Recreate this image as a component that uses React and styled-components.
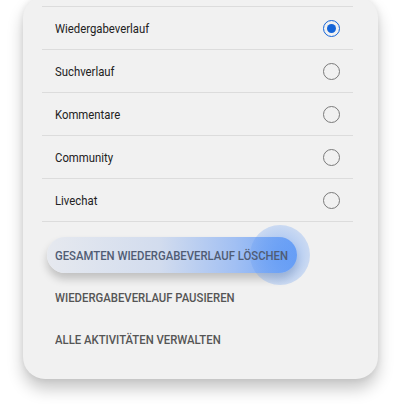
import React from 'react';
import styled, { createGlobalStyle } from 'styled-components';

const GlobalStyle = createGlobalStyle`
  html, body { margin: 0; padding: 0; background: #fff; }
  body { font-family: Roboto, "Noto Sans", sans-serif; }
`;

const Page = styled.div`
  width: 403px;
  height: 404px;
  overflow: hidden;
  padding: 0 25px 0 23px;
  box-sizing: border-box;
`;

const Card = styled.div`
  margin-top: -4px;
  height: 383px;
  background: #f1f1f1;
  border-radius: 22px;
  box-shadow: 0 10px 16px rgba(0, 0, 0, 0.22), 0 0 6px rgba(0, 0, 0, 0.08);
  padding: 10px 25px 0 19px;
  box-sizing: border-box;
`;

const List = styled.ul`
  list-style: none;
  margin: 0;
  padding: 0;
  border-top: 1px solid #dcdcdc;
`;

const Row = styled.li`
  height: 42px;
  border-bottom: 1px solid #dcdcdc;
  display: flex;
  align-items: center;
  justify-content: space-between;
  padding: 0 13px;
  font-size: 12.6px;
  color: #222;
`;

// the shot is a little narrow, so glyphs are squeezed sideways
const Text = styled.span`
  position: relative;
  display: inline-block;
  white-space: nowrap;
  transform: scaleX(0.9);
  transform-origin: left center;
`;

const Radio = styled.span`
  width: 17px;
  height: 17px;
  box-sizing: border-box;
  border-radius: 50%;
  border: 1.5px solid ${p => (p.checked ? '#1565d8' : '#7a7a7a')};
  display: flex;
  align-items: center;
  justify-content: center;
  &::after {
    content: '';
    display: ${p => (p.checked ? 'block' : 'none')};
    width: 9px;
    height: 9px;
    border-radius: 50%;
    background: #1565d8;
  }
`;

const Actions = styled.div`
  display: flex;
  flex-direction: column;
  padding-top: 12px;
`;

const Action = styled.div`
  position: relative;
  height: 42px;
  display: flex;
  align-items: center;
  padding-left: 13px;
  font-size: 12.6px;
  font-weight: 500;
  color: ${p => (p.active ? '#505c74' : '#555')};
`;

const Pill = styled.span`
  position: absolute;
  left: 5px;
  top: 3px;
  width: 250px;
  height: 36px;
  border-radius: 18px;
  background: linear-gradient(90deg, #e6e9ef 0%, #d2dcee 45%, #a2c0f3 75%, #6ea3f6 100%);
  box-shadow: 0 6px 9px rgba(0, 0, 0, 0.2);
`;

const Ripple = styled.span`
  position: absolute;
  left: 208px;
  top: -9px;
  width: 60px;
  height: 60px;
  border-radius: 50%;
  background: radial-gradient(circle, rgba(90, 150, 245, 0.55) 0%, rgba(90, 150, 245, 0.35) 50%, rgba(120, 165, 240, 0.15) 100%);
`;

const rows = [
  { label: 'Wiedergabeverlauf', checked: true },
  { label: 'Suchverlauf' },
  { label: 'Kommentare' },
  { label: 'Community' },
  { label: 'Livechat' },
];

export default function App() {
  return (
    <>
      <GlobalStyle />
      <Page>
        <Card>
          <List>
            {rows.map(r => (
              <Row key={r.label}>
                <Text>{r.label}</Text>
                <Radio checked={r.checked} />
              </Row>
            ))}
          </List>
          <Actions>
            <Action active>
              <Pill />
              <Ripple />
              <Text>GESAMTEN WIEDERGABEVERLAUF LÖSCHEN</Text>
            </Action>
            <Action>
              <Text>WIEDERGABEVERLAUF PAUSIEREN</Text>
            </Action>
            <Action>
              <Text>ALLE AKTIVITÄTEN VERWALTEN</Text>
            </Action>
          </Actions>
        </Card>
      </Page>
    </>
  );
}
